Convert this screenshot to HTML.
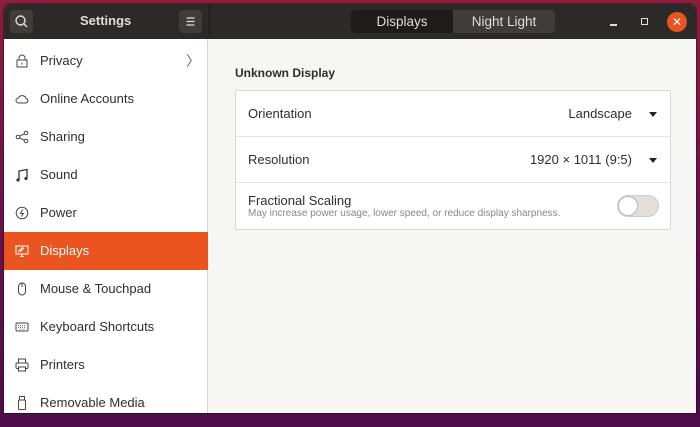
<!DOCTYPE html>
<html><head><meta charset="utf-8"><style>
*{margin:0;padding:0;box-sizing:border-box}
body{width:700px;height:427px;overflow:hidden;font-family:"Liberation Sans",sans-serif;background:linear-gradient(180deg,#8c1d3c 0%,#6e1548 40%,#4c0d4a 100%);position:relative}
.win{position:absolute;left:4px;top:4px;width:692px;height:409px;background:#f6f6f5;border-radius:6px 6px 0 0;overflow:hidden;box-shadow:0 0 0 1px rgba(0,0,0,.3)}
.hb{position:absolute;left:0;top:0;width:692px;height:35px;background:#2c2a29;color:#eee}
.btn{position:absolute;top:6px;width:23px;height:23px;background:#3f3c3a;border-radius:4px}
.title{position:absolute;left:76px;top:9px;font-weight:bold;font-size:13px;color:#ddd}
.sep{position:absolute;left:205px;top:0;width:1px;height:35px;background:#1c1b1a}
.seg{position:absolute;top:6px;height:23px;font-size:13.5px;line-height:23px;text-align:center;color:#ddd}
.side{position:absolute;left:0;top:35px;width:204px;height:374px;background:#fff;border-right:1px solid #d8d6d4}
.it{position:absolute;left:0;width:204px;height:38px;font-size:13px;color:#2e2e2e;line-height:38px;padding-left:36px}
.it svg{position:absolute;left:11px;top:12px}
.act{background:#e95420;color:#fff}
.h{position:absolute;left:231px;top:62px;font-weight:bold;font-size:12px;color:#2e2e2e}
.card{position:absolute;left:231px;top:86px;width:436px;height:140px;background:#fff;border:1px solid #d9d7d5;border-radius:2px}
.row{position:absolute;left:0;width:434px;height:46px;border-bottom:1px solid #e6e4e2;font-size:13px;color:#2e2e2e}
.row .l{position:absolute;left:12px;top:15px}
.row .r{position:absolute;right:38px;top:15px}
.tri{position:absolute;right:13px;top:21px;width:0;height:0;border-left:4px solid transparent;border-right:4px solid transparent;border-top:5px solid #222}
</style></head><body>
<div class="win">
 <div class="hb">
  <div class="btn" style="left:6px"><svg width="23" height="23"><circle cx="10.5" cy="10.5" r="4.5" fill="none" stroke="#ddd" stroke-width="1.4"/><line x1="14" y1="14" x2="17" y2="17" stroke="#ddd" stroke-width="1.5"/></svg></div>
  <div class="title">Settings</div>
  <div class="btn" style="left:175px"><svg width="23" height="23"><path d="M7.5 8h8M7.5 11.5h8M7.5 15h8" stroke="#ddd" stroke-width="1.3"/></svg></div>
  <div class="sep"></div>
  <div class="seg" style="left:347px;width:102px;background:#1d1c1b;border-radius:4px 0 0 4px">Displays</div>
  <div class="seg" style="left:449px;width:102px;background:#3f3c3a;border-radius:0 4px 4px 0">Night Light</div>
  <div style="position:absolute;left:606px;top:20px;width:7px;height:1.5px;background:#ddd"></div>
  <div style="position:absolute;left:637px;top:14px;width:7px;height:7px;border:1.5px solid #ddd"></div>
  <div style="position:absolute;left:663px;top:8px;width:20px;height:20px;border-radius:50%;background:#e95420;color:#fff;font-size:12px;line-height:20px;text-align:center">✕</div>
 </div>
 <div class="side">
  <div class="it" style="top:3px"><svg width="14" height="14"><rect x="2" y="6" width="10" height="7" fill="none" stroke="#444"/><path d="M4 6V4a3 3 0 0 1 6 0v2" fill="none" stroke="#444"/><rect x="6.5" y="8.5" width="1" height="2" fill="#444"/></svg>Privacy<span style="position:absolute;left:182px;color:#666;font-size:14px">〉</span></div>
  <div class="it" style="top:41px"><svg width="14" height="14"><path d="M3.5 11a2.5 2.5 0 0 1 0-5 4 4 0 0 1 7.5 0.5 2.3 2.3 0 0 1 0 4.5z" fill="none" stroke="#444"/></svg>Online Accounts</div>
  <div class="it" style="top:79px"><svg width="14" height="14"><circle cx="3" cy="7" r="1.8" fill="none" stroke="#444"/><circle cx="11" cy="3" r="1.8" fill="none" stroke="#444"/><circle cx="11" cy="11" r="1.8" fill="none" stroke="#444"/><path d="M4.6 6.2l4.8-2.4M4.6 7.8l4.8 2.4" stroke="#444"/></svg>Sharing</div>
  <div class="it" style="top:117px"><svg width="14" height="14"><path d="M4 12V3l8-1.5V10" fill="none" stroke="#333" stroke-width="1.3"/><circle cx="3" cy="12" r="1.6" fill="#333"/><circle cx="11" cy="10.5" r="1.6" fill="#333"/></svg>Sound</div>
  <div class="it" style="top:155px"><svg width="14" height="14"><circle cx="7" cy="7" r="5.8" fill="none" stroke="#444"/><path d="M7.8 3.5L5.5 7.5h3L6.2 10.5" fill="none" stroke="#444"/></svg>Power</div>
  <div class="it act" style="top:193px"><svg width="14" height="14"><rect x="1" y="2" width="12" height="8" fill="none" stroke="#fff"/><path d="M5 12.5h4M7 10v2.5M3 8l5-5M5 8l4-4" stroke="#fff"/></svg>Displays</div>
  <div class="it" style="top:231px"><svg width="14" height="14"><rect x="3.5" y="1" width="7" height="12" rx="3.5" fill="none" stroke="#444"/><path d="M7 1v4" stroke="#444"/></svg>Mouse &amp; Touchpad</div>
  <div class="it" style="top:269px"><svg width="14" height="14"><rect x="1" y="3" width="12" height="8" rx="1" fill="none" stroke="#444"/><path d="M3 5.5h8M3 7.5h8M4.5 9.3h5" stroke="#777" stroke-dasharray="1 1"/></svg>Keyboard Shortcuts</div>
  <div class="it" style="top:307px"><svg width="14" height="14"><rect x="3.5" y="1" width="7" height="4" fill="none" stroke="#444"/><rect x="1" y="5" width="12" height="5.5" rx="1" fill="none" stroke="#444"/><rect x="3.5" y="9" width="7" height="4" fill="#fff" stroke="#444"/></svg>Printers</div>
  <div class="it" style="top:345px"><svg width="14" height="14"><rect x="3.5" y="4" width="7" height="9.5" rx="1" fill="none" stroke="#444"/><rect x="4.5" y="0.5" width="5" height="3.5" fill="none" stroke="#444"/></svg>Removable Media</div>
 </div>
 <div class="h">Unknown Display</div>
 <div class="card">
  <div class="row" style="top:0"><span class="l">Orientation</span><span class="r">Landscape</span><div class="tri"></div></div>
  <div class="row" style="top:46px"><span class="l">Resolution</span><span class="r">1920 × 1011 (9:5)</span><div class="tri"></div></div>
  <div class="row" style="top:92px;border:none"><span class="l" style="top:10px">Fractional Scaling</span><span style="position:absolute;left:12px;top:25px;font-size:10px;color:#888">May increase power usage, lower speed, or reduce display sharpness.</span>
   <div style="position:absolute;left:381px;top:12px;width:42px;height:22px;border-radius:11px;background:#e1dedb;border:1px solid #ccc"><div style="position:absolute;left:0;top:0;width:20px;height:20px;border-radius:50%;background:#fff;border:1px solid #bbb"></div></div>
  </div>
 </div>
</div>
</body></html>
